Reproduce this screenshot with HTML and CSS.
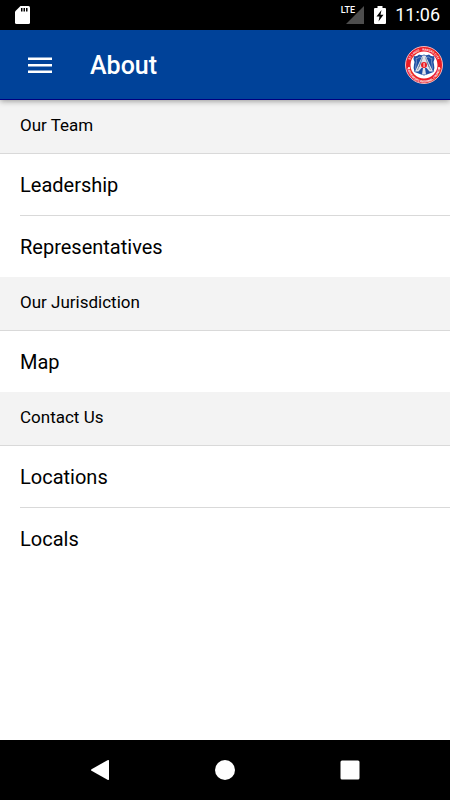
FILE: index.html
```html
<!DOCTYPE html>
<html lang="en">
<head>
  <meta charset="UTF-8" />
  <meta name="viewport" content="width=device-width, initial-scale=1.0"/>
  <title>About</title>
  <link rel="stylesheet" href="styles.css">
</head>
<body>

  <!-- Status bar -->
  <div class="status-bar">
    <svg class="sd-icon" width="15" height="18" viewBox="0 0 15 18">
      <path fill="#fff" d="M5.500 0H13.500Q15 0 15 1.500V16.500Q15 18 13.500 18H1.500Q0 18 0 16.500V5.500Z"/>
      <path fill="#000" d="M6 2h1.500v3.500H6zM8.500 2H10v3.500H8.500zM11 2h1.500v3.500H11z"/>
    </svg>
    <div class="status-right">
      <div class="signal">
        <span class="lte">LTE</span>
        <svg width="18" height="18" viewBox="0 0 18 18"><path fill="#4d4d4d" d="M18 0V18H0Z"/></svg>
      </div>
      <svg class="battery" width="12" height="18" viewBox="0 0 12 18">
        <path fill="#fff" d="M3.500 0h5v2H11q1 0 1 1v14q0 1-1 1H1q-1 0-1-1V3q0-1 1-1h2.500z"/>
        <path fill="#000" d="M7.500 4L2.500 10.500H5.500L4.500 15.500L9.500 8.800H6.500Z"/>
      </svg>
      <span class="clock">11:06</span>
    </div>
  </div>

  <!-- App bar -->
  <header class="app-bar">
    <button class="menu-button" aria-label="Open menu">
      <svg width="24" height="16" viewBox="0 0 24 16"><path fill="#fff" d="M0 0.500h24v2.500H0zM0 7h24v2.500H0zM0 13.500h24v2.500H0z"/></svg>
    </button>
    <h1>About</h1>
    <svg class="logo" width="38" height="38" viewBox="0 0 38 38">
      <defs>
        <path id="arc-top" d="M4.500 19A14.500 14.500 0 0 1 33.500 19"/>
        <path id="arc-bottom" d="M2.500 20A16.500 16.500 0 0 0 35.500 20"/>
      </defs>
      <circle cx="19" cy="19" r="18.500" fill="#ec1c24" stroke="#f6b8bb" stroke-width="1"/>
      <circle cx="19" cy="19" r="13.500" fill="#fff"/>
      <path fill="#1d4fa3" d="M9 10Q12 11 14 8.500Q17 10 19 8.500Q21 10 24 8.500Q26 11 29 10L29.500 13Q28 15.500 29 18.500Q30 22 28.500 26Q24 27.500 19 29.500Q14 27.500 9.500 26Q8 22 9 18.500Q10 15.500 8.500 13Z"/>
      <path fill="none" stroke="#a9bbdc" stroke-width="0.600" d="M11 12.500Q13 12.500 14.500 11Q16.500 12 19 10.500Q21.500 12 23.500 11Q25 12.500 27 12.500Q26 15.500 27 18.500Q28 22 26.500 24.500M11 12.500Q12 15.500 11 18.500Q10 22 11.500 24.500"/>
      <path fill="#dfe3ea" d="M17.500 9.500h3L28 25.500h-3.500L21.500 22h-5L13.500 25.500H10Z"/>
      <path fill="none" stroke="#6b7f9f" stroke-width="0.800" d="M17.500 11.500L14 21M20.500 11.500L24 21M16 16L12.500 24M22 16L25.500 24"/>
      <path fill="#dfe3ea" d="M18 22h2l1 6.500h-4z"/>
      <circle cx="19" cy="19" r="3" fill="#ec1c24"/>
      <path fill="#fff" d="M18.600 17h0.900v4h-0.900z"/>
      <circle cx="4" cy="22" r="1" fill="#fff"/>
      <circle cx="34" cy="22" r="1" fill="#fff"/>
      <text class="logo-text"><textPath href="#arc-top" startOffset="50%">ST. LOUIS - KANSAS CITY</textPath></text>
      <text class="logo-text"><textPath href="#arc-bottom" startOffset="50%">CARPENTERS REGIONAL COUNCIL</textPath></text>
    </svg>
  </header>

  <main>
    <section>
      <h2>Our Team</h2>
      <ul>
        <li><a href="#leadership">Leadership</a></li>
        <li><a href="#representatives">Representatives</a></li>
      </ul>
    </section>
    <section>
      <h2>Our Jurisdiction</h2>
      <ul>
        <li><a href="#map">Map</a></li>
      </ul>
    </section>
    <section>
      <h2>Contact Us</h2>
      <ul>
        <li><a href="#locations">Locations</a></li>
        <li><a href="#locals">Locals</a></li>
      </ul>
    </section>
  </main>

  <!-- System navigation -->
  <nav class="nav-bar">
    <button aria-label="Back">
      <svg width="20" height="20" viewBox="0 0 20 20"><path fill="#fff" d="M17.500 0.200Q19 -0.500 19 1V19Q19 20.500 17.500 19.800L1.500 10.800Q0.500 10 1.500 9.200Z"/></svg>
    </button>
    <button aria-label="Home">
      <svg width="20" height="20" viewBox="0 0 20 20"><circle cx="10" cy="10" r="10" fill="#fff"/></svg>
    </button>
    <button aria-label="Recent apps">
      <svg width="20" height="20" viewBox="0 0 20 20"><rect x="0.500" y="0.500" width="19" height="19" rx="1.500" fill="#fff"/></svg>
    </button>
  </nav>

</body>
</html>
```
FILE: styles.css
```css
*, *::before, *::after {
  box-sizing: border-box;
}

body {
  margin: 0;
  min-height: 100vh;
  display: flex;
  flex-direction: column;
  font-family: Roboto, sans-serif;
  color: #000;
  background: #fff;
}

svg {
  display: block;
}

button {
  padding: 0;
  border: none;
  background: none;
  cursor: pointer;
}

.status-bar {
  height: 30px;
  padding: 0 10px 0 15px;
  display: flex;
  align-items: center;
  justify-content: space-between;
  background: #000;
  color: #fff;
}

.status-right {
  display: flex;
  align-items: center;
}

.signal {
  position: relative;
  margin-right: 10px;
}

.lte {
  position: absolute;
  top: 0;
  right: 9px;
  font-size: 9px;
  line-height: 9px;
  font-weight: 500;
}

.battery {
  margin-right: 9px;
}

.clock {
  font-size: 18px;
  line-height: 30px;
}

.app-bar {
  position: relative;
  height: 70px;
  padding: 0 7px 0 28px;
  display: flex;
  align-items: center;
  background: #004299;
  color: #fff;
  border-bottom: 1px solid #00007f;
  box-shadow: 0 1px 6px rgba(0, 0, 0, .4);
}

.menu-button {
  margin-right: 38px;
}

h1 {
  flex: 1;
  margin: 0;
  padding-top: 2px;
  font-size: 25px;
  line-height: 30px;
  font-weight: 500;
}

.logo-text {
  font-size: 3px;
  font-weight: 700;
  fill: #fff;
  text-anchor: middle;
}

main {
  flex: 1;
}

h2 {
  margin: 0;
  padding: 12px 20px 15px;
  font-size: 17px;
  line-height: 26px;
  font-weight: 400;
  background: #f3f3f3;
  border-bottom: 1px solid #d9d9d9;
}

ul {
  margin: 0;
  padding: 0 0 0 20px;
  list-style: none;
}

li + li {
  border-top: 1px solid #d9d9d9;
}

li a {
  display: block;
  padding-top: 1px;
  font-size: 20px;
  line-height: 60px;
  color: #000;
  text-decoration: none;
}

.nav-bar {
  height: 60px;
  padding: 0 38px;
  display: flex;
  align-items: center;
  justify-content: space-around;
  background: #000;
}
```
